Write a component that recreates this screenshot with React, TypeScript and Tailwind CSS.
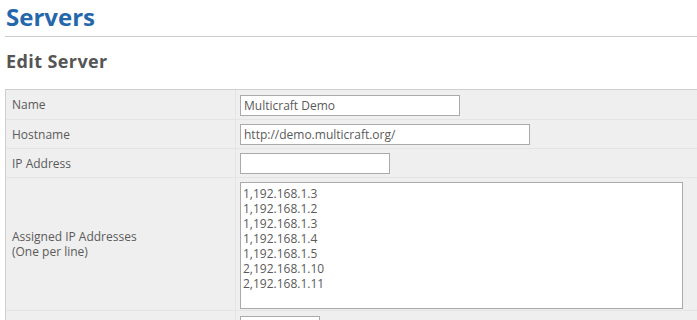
import React from "react";

const ips = ["1,192.168.1.3", "1,192.168.1.2", "1,192.168.1.3", "1,192.168.1.4", "1,192.168.1.5", "2,192.168.1.10", "2,192.168.1.11"];

function Row({ label, children, h, pt }: { label: React.ReactNode; children: React.ReactNode; h: string; pt: string }) {
  return (
    <div className={`flex border-b border-[#e4e4e4] ${h}`}>
      <div className="w-[230px] shrink-0 border-r border-[#e4e4e4] flex items-center pl-[6px] text-[12px] leading-[15px] text-[#5a5a5a]">
        {label}
      </div>
      <div className={`flex-1 pl-[4px] ${pt}`}>{children}</div>
    </div>
  );
}

export default function App() {
  return (
    <div className="w-[697px] h-[320px] overflow-hidden bg-white pl-[5px]" style={{ fontFamily: '"Open Sans", "DejaVu Sans", sans-serif' }}>
      <div className="h-[37px] border-b border-[#cccccc] pl-[1px]">
        <h1 className="text-[24px] font-bold leading-[32px] pt-[1px] text-[#2467ab]">Servers</h1>
      </div>
      <div className="h-[52px] pl-[1px] pt-[12px]">
        <h2 className="text-[18px] font-bold leading-[24px] text-[#555555] tracking-[0.4px]">Edit Server</h2>
      </div>
      <div className="border-t border-l border-[#cfcfcf] bg-[#efefef] w-[720px]">
        <Row label="Name" h="h-[30px]" pt="pt-[5px]">
          <div className="w-[220px] h-[21px] border border-[#aaaaaa] bg-white pl-[3px] text-[12px] leading-[19px] text-[#5a5a5a]">Multicraft Demo</div>
        </Row>
        <Row label="Hostname" h="h-[29px]" pt="pt-[4px]">
          <div className="w-[290px] h-[21px] border border-[#aaaaaa] bg-white pl-[3px] text-[12px] leading-[19px] text-[#5a5a5a]">http://demo.multicraft.org/</div>
        </Row>
        <Row label="IP Address" h="h-[29px]" pt="pt-[4px]">
          <div className="w-[150px] h-[21px] border border-[#aaaaaa] bg-white" />
        </Row>
        <Row label={<span>Assigned IP Addresses<br />(One per line)</span>} h="h-[133px]" pt="pt-[4px]">
          <div className="w-[443px] h-[127px] border border-[#aaaaaa] bg-white pl-[2px] pt-[3px] text-[12px] leading-[15px] text-[#5a5a5a]">
            {ips.map((ip, i) => (
              <div key={i}>{ip}</div>
            ))}
          </div>
        </Row>
        <Row label="" h="h-[29px]" pt="pt-[5px]">
          <div className="w-[80px] h-[21px] border border-[#aaaaaa] bg-white" />
        </Row>
      </div>
    </div>
  );
}
